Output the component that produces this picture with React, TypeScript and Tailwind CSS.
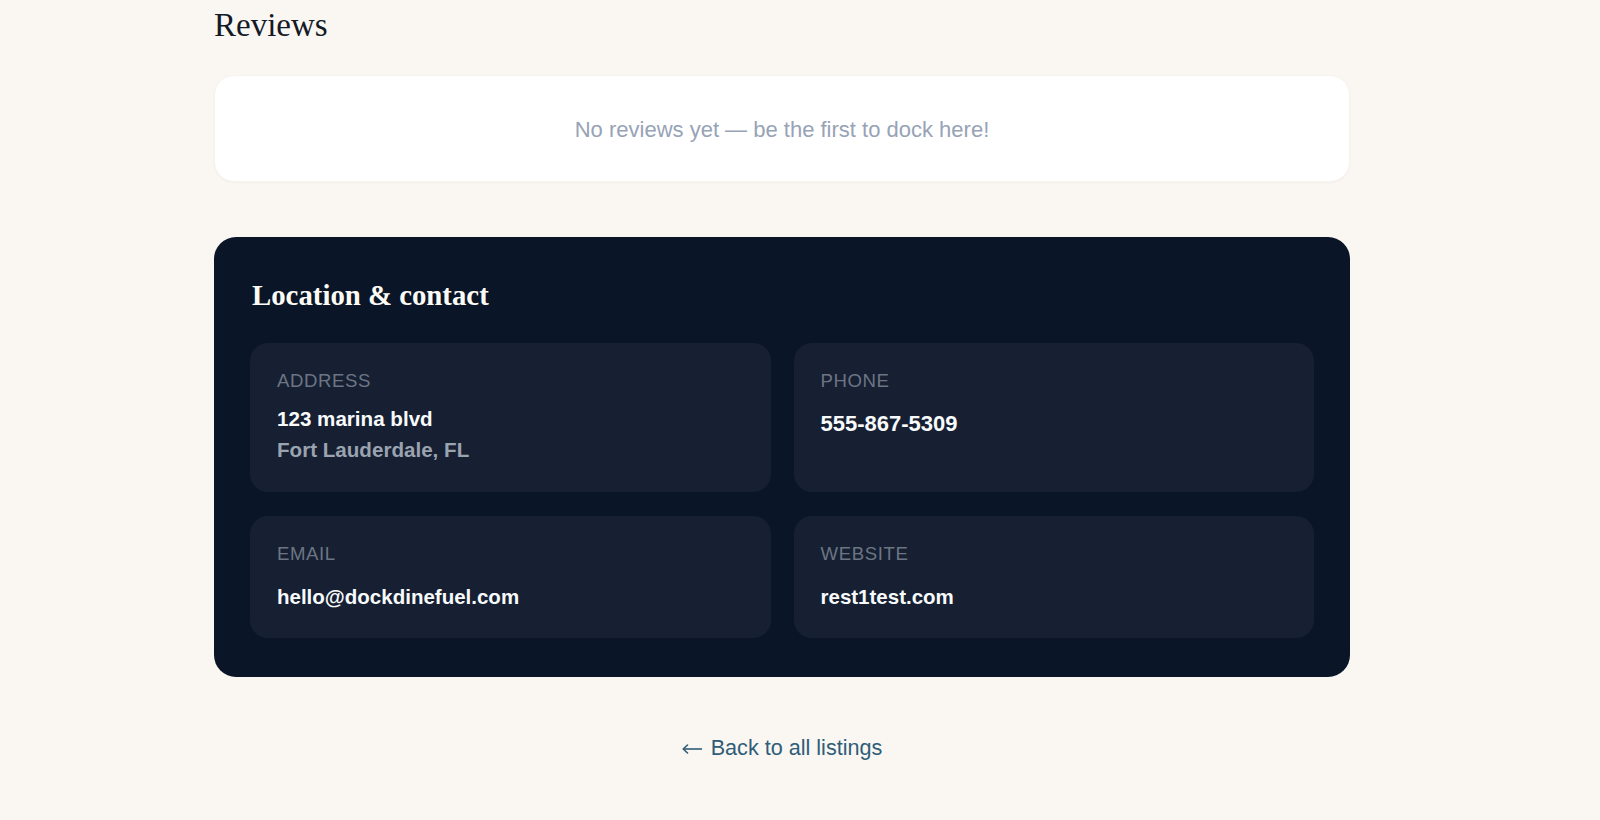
import React from "react";

const sans = { fontFamily: '"Liberation Sans", Arial, sans-serif' };

function InfoBox({ label, children }: { label: string; children: React.ReactNode }) {
  return (
    <div className="rounded-[18px] bg-[#162032] px-[27px] pt-[26px] pb-[26px]">
      <div className="text-[18.6px] leading-[24px] uppercase tracking-[0.6px] text-[#6c7584]">{label}</div>
      {children}
    </div>
  );
}

export default function App() {
  return (
    <div className="min-h-screen bg-[#faf7f2]" style={sans}>
      <div className="pl-[214px]">
        <div className="w-[1136px] pt-[5px] pb-[60px]">
          <h2
            className="text-[33px] leading-[40px] text-[#141a26] mb-[30px]"
            style={{ fontFamily: '"Liberation Serif", "Times New Roman", serif' }}
          >
            Reviews
          </h2>

          <div className="rounded-[20px] bg-white border border-[#f7f3ee] shadow-[0_1px_2px_rgba(0,0,0,0.03)] pt-[37px] pb-[35px] text-center">
            <p className="text-[22px] leading-[33px] text-[#97a3b6]">
              No reviews yet — be the first to dock here!
            </p>
          </div>

          <section className="mt-[55px] rounded-[22px] bg-[#0a1527] px-[36px] pt-[40px] pb-[39px]">
            <h3
              className="ml-[2px] text-[28.8px] leading-[36px] font-bold text-[#fdfbf6] mb-[30px]"
              style={{ fontFamily: '"Liberation Serif", "Times New Roman", serif' }}
            >
              Location &amp; contact
            </h3>
            <div className="grid grid-cols-2 gap-x-[23px] gap-y-[24px]">
              <InfoBox label="Address">
                <div className="mt-[10px] text-[20.6px] leading-[31.4px] font-bold">
                  <div className="text-[#f8fafc]">123 marina blvd</div>
                  <div className="text-[#9aa3b0]">Fort Lauderdale, FL</div>
                </div>
              </InfoBox>
              <InfoBox label="Phone">
                <div className="mt-[14px] text-[22px] leading-[33px] font-bold text-[#f8fafc]">555-867-5309</div>
              </InfoBox>
              <InfoBox label="Email">
                <div className="mt-[15px] text-[20.5px] leading-[31px] font-bold text-[#f8fafc]">
                  hello@dockdinefuel.com
                </div>
              </InfoBox>
              <InfoBox label="Website">
                <div className="mt-[15px] text-[20.5px] leading-[31px] font-bold text-[#f8fafc]">rest1test.com</div>
              </InfoBox>
            </div>
          </section>

          <div className="mt-[55px] flex justify-center">
            <a href="#" className="flex items-center gap-[9px] text-[21.6px] leading-[32px] text-[#2f5d78]">
              <svg width="20" height="10" viewBox="0 0 20 10" fill="none" stroke="currentColor" strokeWidth="1.6" className="mt-[3px]">
                <path d="M20 5H1.5" />
                <path d="M5.5 1L1.2 5l4.3 4" strokeLinecap="round" strokeLinejoin="round" />
              </svg>
              <span>Back to all listings</span>
            </a>
          </div>
        </div>
      </div>
    </div>
  );
}
